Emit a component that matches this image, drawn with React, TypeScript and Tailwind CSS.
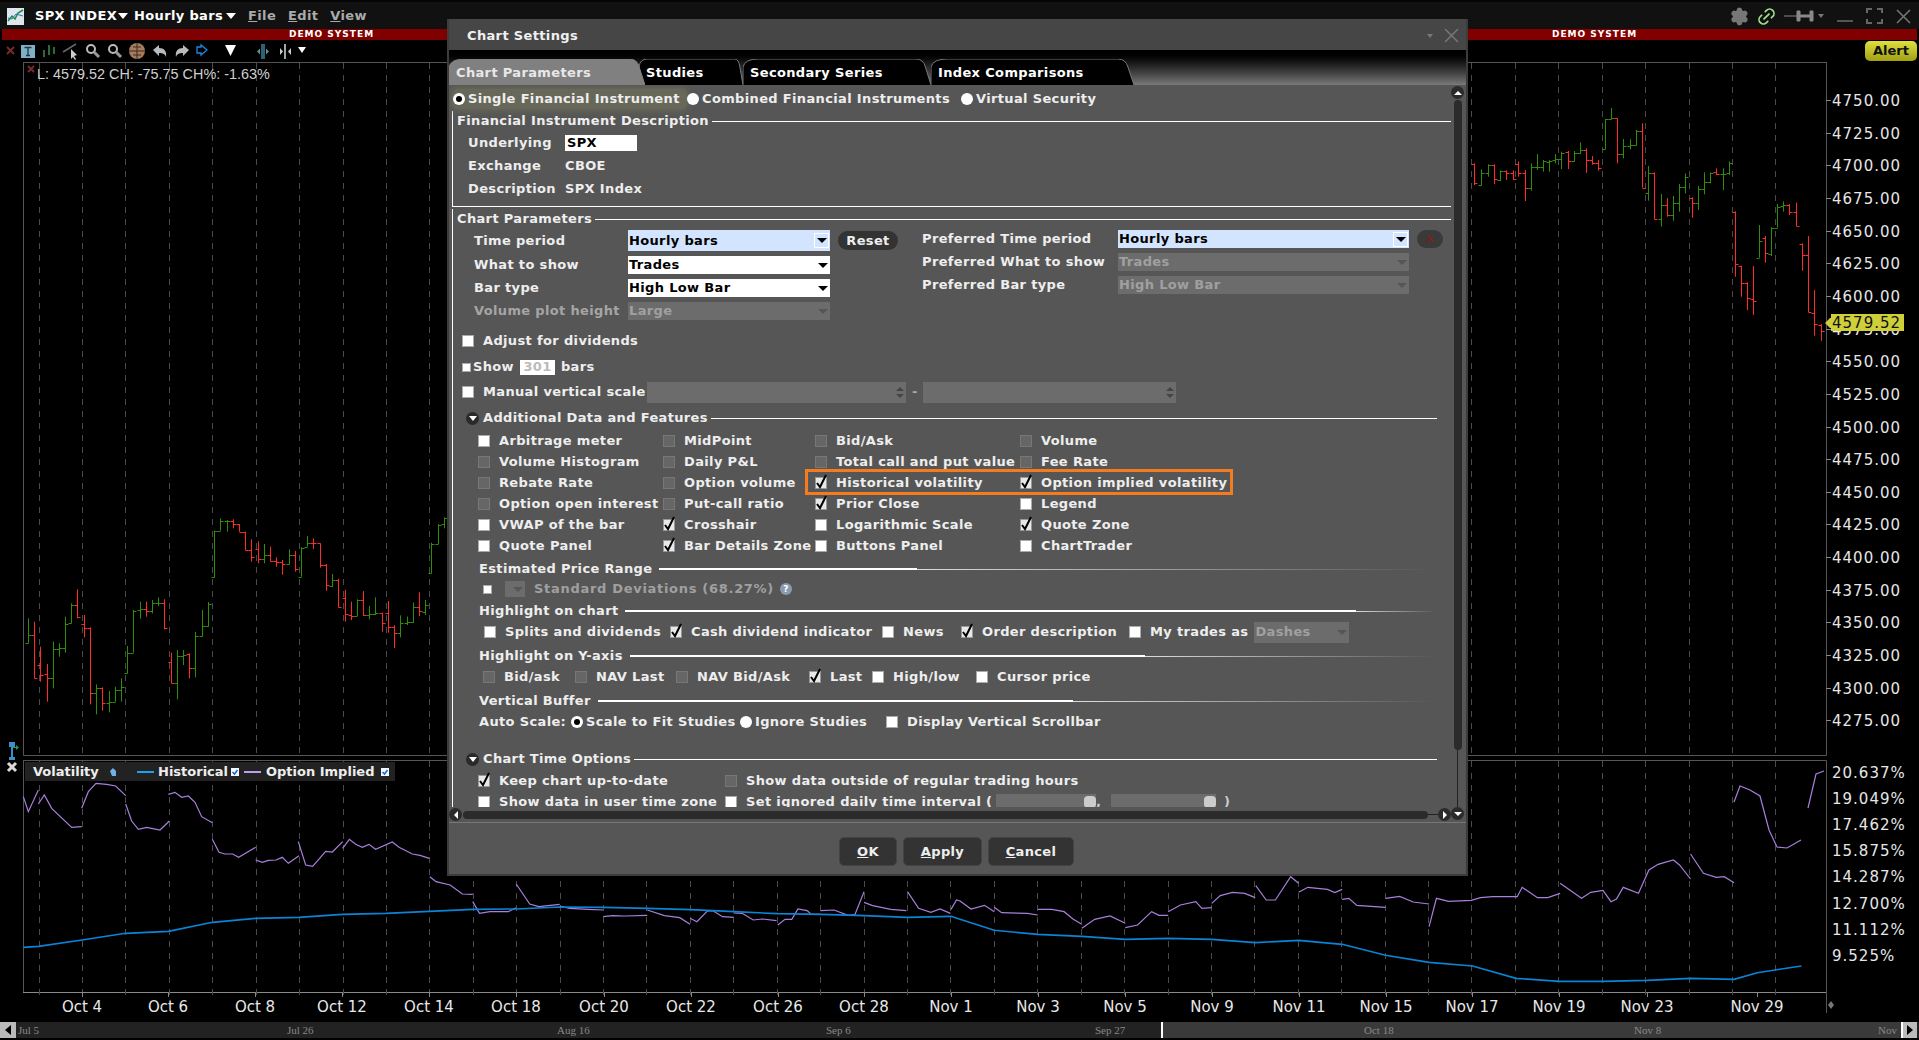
import React, { ReactNode } from 'react'
import { Link2, Settings } from 'lucide-react'

type Tone = 'focus' | 'white' | 'off'

// bars read off the picture at 3x: x, high, low, open, close, up
type Bar = [number, number, number, number, number, number]

const leftBars: Bar[] = [
  [85, 355, 430, 430, 405, 1], [103, 365, 535, 405, 535, 0], [121, 440, 545, 495, 525, 0], [142, 492, 605, 522, 535, 0],
  [160, 425, 565, 535, 447, 1], [178, 430, 470, 447, 445, 1], [196, 350, 458, 445, 372, 1], [214, 310, 370, 370, 315, 1],
  [232, 268, 355, 315, 350, 0], [253, 345, 412, 372, 385, 0], [271, 382, 613, 385, 580, 0], [289, 553, 643, 580, 565, 1],
  [307, 562, 632, 565, 610, 0], [328, 573, 637, 608, 606, 1], [346, 560, 605, 605, 570, 1], [364, 535, 605, 570, 560, 1],
  [382, 438, 520, 520, 458, 1], [400, 330, 458, 458, 333, 1], [421, 305, 356, 330, 328, 1], [439, 305, 350, 328, 332, 0],
  [457, 300, 340, 332, 310, 1], [475, 292, 318, 310, 310, 1], [493, 298, 388, 310, 385, 0], [514, 458, 550, 487, 548, 0],
  [532, 450, 598, 548, 468, 1], [550, 450, 495, 468, 465, 1], [568, 460, 535, 463, 505, 0], [586, 396, 532, 505, 408, 1],
  [607, 330, 410, 408, 378, 1], [625, 306, 380, 378, 312, 1], [643, 92, 232, 232, 92, 1], [661, 55, 92, 92, 62, 1],
  [682, 60, 95, 64, 62, 1], [700, 58, 85, 62, 72, 0], [718, 72, 95, 72, 95, 0], [736, 95, 150, 95, 150, 0],
  [754, 118, 185, 150, 172, 0], [775, 124, 190, 146, 178, 0], [793, 132, 190, 178, 165, 1], [811, 140, 185, 165, 184, 0],
  [829, 172, 200, 184, 187, 0], [847, 180, 224, 187, 193, 0], [868, 148, 193, 193, 165, 1], [886, 153, 215, 165, 208, 0],
  [904, 142, 230, 230, 145, 1], [922, 108, 140, 140, 128, 1], [940, 115, 147, 128, 130, 0], [961, 130, 203, 130, 195, 0],
  [979, 192, 272, 195, 255, 0], [997, 222, 260, 258, 240, 1], [1015, 236, 322, 240, 322, 0], [1036, 270, 365, 295, 343, 0],
  [1054, 305, 360, 345, 348, 0], [1072, 298, 348, 348, 300, 1], [1090, 273, 348, 300, 345, 0], [1108, 318, 358, 345, 343, 1],
  [1126, 292, 345, 343, 340, 1], [1147, 338, 395, 340, 368, 0], [1165, 303, 398, 338, 382, 0], [1183, 376, 444, 382, 400, 0],
  [1201, 346, 412, 400, 368, 1], [1222, 350, 375, 368, 365, 1], [1240, 308, 368, 365, 322, 1], [1258, 277, 348, 322, 333, 0],
  [1276, 300, 345, 335, 315, 1], [1294, 128, 220, 220, 132, 1], [1315, 72, 132, 132, 75, 1], [1333, 52, 85, 72, 55, 1],
]

const rightBars: Bar[] = [
  [41, 490, 555, 492, 550, 0], [64, 508, 557, 555, 520, 1], [83, 493, 530, 520, 495, 1], [101, 493, 552, 495, 538, 0],
  [119, 511, 543, 540, 513, 1], [137, 511, 540, 514, 518, 0], [158, 511, 540, 518, 538, 0], [173, 484, 530, 492, 520, 0],
  [194, 510, 603, 520, 563, 0], [212, 490, 572, 563, 502, 1], [230, 462, 510, 502, 502, 1], [250, 480, 515, 502, 484, 1],
  [268, 480, 515, 487, 483, 1], [286, 462, 490, 480, 478, 1], [304, 455, 507, 478, 458, 1], [325, 453, 507, 455, 483, 0],
  [343, 453, 485, 483, 460, 1], [361, 427, 462, 460, 450, 1], [379, 445, 518, 450, 480, 0], [397, 468, 494, 480, 488, 0],
  [415, 480, 512, 488, 505, 0], [436, 357, 448, 448, 358, 1], [454, 324, 358, 358, 355, 1], [472, 355, 490, 355, 463, 0],
  [490, 417, 475, 463, 437, 1], [511, 418, 448, 437, 436, 1], [529, 390, 437, 436, 393, 1], [547, 370, 563, 393, 563, 0],
  [565, 498, 602, 580, 520, 1], [583, 517, 658, 520, 658, 0], [604, 582, 680, 658, 615, 1], [622, 594, 650, 615, 645, 0],
  [640, 588, 662, 645, 608, 1], [658, 552, 635, 608, 562, 1], [676, 520, 580, 562, 530, 1], [697, 592, 653, 595, 610, 0],
  [715, 558, 630, 610, 568, 1], [733, 517, 583, 568, 545, 1], [751, 517, 550, 545, 520, 1], [769, 505, 525, 515, 523, 0],
  [790, 505, 570, 523, 522, 1], [808, 484, 525, 520, 490, 1], [826, 634, 830, 636, 793, 0], [844, 797, 890, 798, 848, 0],
  [862, 847, 930, 848, 895, 0], [880, 798, 945, 898, 902, 0], [898, 675, 773, 773, 723, 1], [916, 708, 788, 715, 760, 0],
  [934, 682, 768, 763, 685, 1], [952, 612, 683, 683, 620, 1], [970, 604, 635, 618, 615, 1], [988, 612, 645, 615, 637, 0],
  [1009, 608, 678, 637, 677, 0], [1027, 730, 812, 732, 766, 0], [1045, 708, 937, 766, 937, 0], [1063, 870, 1007, 940, 972, 0],
  [1084, 972, 1022, 975, 992, 0],
]

const gridX = Array.from({ length: 41 }, (_, i) => 38.6 + i * 43.42)

const xLabels: [string, number][] = [
  ['Oct 4', 82], ['Oct 6', 168], ['Oct 8', 255], ['Oct 12', 342], ['Oct 14', 429], ['Oct 18', 516], ['Oct 20', 604],
  ['Oct 22', 691], ['Oct 26', 778], ['Oct 28', 864], ['Nov 1', 951], ['Nov 3', 1038], ['Nov 5', 1125], ['Nov 9', 1212],
  ['Nov 11', 1299], ['Nov 15', 1386], ['Nov 17', 1472], ['Nov 19', 1559], ['Nov 23', 1647], ['Nov 29', 1757],
]

const priceLabels = Array.from({ length: 20 }, (_, i) => 4750 - i * 25)
const volLabels = ['20.637%', '19.049%', '17.462%', '15.875%', '14.287%', '12.700%', '11.112%', '9.525%']

const pts = (list: number[][]) => list.map(p => p.join(',')).join(' ')
const z9 = (a: number[][]) => a.map(([x, y]) => [x / 3, 500 + y / 3])
const z12 = (a: number[][]) => a.map(([x, y]) => [200 + x / 3, 770 + y / 3])
const z10 = (a: number[][]) => a.map(([x, y]) => [x / 1.633, 830 + y / 3])
const z11 = (a: number[][]) => a.map(([x, y]) => [960 + x / 1.633, 830 + y / 3])

const purple: number[][][] = [
  z9([[70, 890], [85, 935], [115, 870]]),
  z9([[115, 912], [133, 885], [155, 925], [215, 982], [245, 980]]),
  z9([[245, 925], [265, 875], [288, 850], [320, 853], [347, 858], [377, 887]]),
  z9([[377, 912], [395, 963], [415, 988], [440, 982], [480, 990], [508, 963]]),
  z9([[505, 883], [525, 877], [545, 892], [565, 888], [585, 907], [605, 950], [637, 968]]),
  z12([[37, 208], [57, 247], [75, 252], [98, 252], [116, 262], [167, 232]]),
  z12([[167, 270], [187, 277], [205, 271], [228, 270], [247, 262], [265, 280], [297, 257]]),
  z12([[295, 215], [317, 285], [338, 289], [377, 244], [397, 246], [428, 215]]),
  z12([[428, 235], [448, 208], [467, 223], [487, 232], [507, 223], [527, 238], [577, 216], [597, 232], [637, 252], [660, 256], [688, 265]]),
  z10([[702, 140], [712, 155], [735, 165], [755, 192], [772, 193]]),
  z10([[772, 215], [783, 250], [800, 245], [830, 245], [843, 233]]),
  z10([[843, 162], [865, 222], [880, 230], [914, 223]]),
  z10([[914, 228], [930, 235], [960, 238], [985, 240]]),
  z10([[985, 260], [1000, 257], [1020, 258], [1057, 256]]),
  z10([[1057, 240], [1085, 257], [1110, 263], [1127, 283]]),
  z10([[1127, 265], [1138, 275], [1155, 243], [1165, 243], [1180, 260], [1198, 262]]),
  z10([[1198, 249], [1212, 250], [1230, 270], [1245, 267], [1268, 272]]),
  z10([[1270, 285], [1282, 268], [1293, 268], [1303, 237], [1318, 242], [1325, 253], [1340, 253]]),
  z10([[1340, 242], [1362, 240], [1385, 256], [1396, 254], [1411, 185]]),
  z10([[1411, 217], [1425, 227], [1455, 238], [1480, 242]]),
  z10([[1482, 185], [1500, 235], [1520, 247], [1535, 237], [1552, 250]]),
  z10([[1553, 238], [1562, 210], [1568, 213]]),
  z11([[0, 213], [18, 237], [40, 226], [56, 245]]),
  z11([[56, 232], [68, 248], [110, 250], [127, 255]]),
  z11([[127, 238], [150, 238], [170, 245], [185, 268], [199, 283]]),
  z11([[199, 295], [220, 268], [245, 258], [270, 280]]),
  z11([[270, 293], [290, 285], [313, 245], [325, 256], [340, 256]]),
  z11([[340, 245], [360, 225], [385, 215], [395, 235], [411, 233]]),
  z11([[411, 220], [425, 197], [445, 187], [465, 190], [482, 203]]),
  z11([[483, 167], [500, 210], [515, 210], [540, 140], [553, 160]]),
  z11([[553, 187], [568, 172], [600, 178], [612, 188], [624, 178]]),
  z11([[624, 208], [635, 205], [648, 226], [695, 232]]),
  z11([[695, 205], [718, 199], [740, 216], [766, 222]]),
  z11([[766, 290], [778, 205], [798, 214], [835, 211], [850, 203], [870, 200], [910, 200], [918, 172], [943, 203], [960, 203], [980, 190]]),
  z11([[980, 160], [1015, 205], [1030, 187], [1050, 181], [1063, 215], [1072, 207], [1083, 172], [1108, 190], [1125, 120], [1140, 103], [1165, 90], [1175, 105], [1193, 147]]),
  z11([[1193, 72], [1214, 130], [1235, 142], [1248, 140], [1264, 158]]),
  [[1734, 802], [1740, 786], [1750, 790], [1760, 796], [1769, 830], [1777, 847], [1787, 848], [1801, 840]],
  [[1808, 808], [1816, 774], [1824, 771]],
]

const blue: number[][] = [
  ...z10([[38, 352], [63, 349], [134, 330], [205, 310], [275, 304], [347, 277], [417, 265], [488, 262], [559, 253], [630, 250], [701, 244], [772, 238], [843, 237], [914, 231], [986, 232], [1057, 235], [1128, 239], [1199, 245], [1270, 251], [1341, 253], [1411, 257], [1482, 262], [1553, 259]]),
  ...z11([[0, 268], [56, 301], [127, 313], [199, 319], [270, 328], [340, 325], [411, 328], [482, 338], [553, 331], [624, 343], [695, 376], [766, 397], [837, 408], [908, 445], [979, 454], [1050, 454], [1122, 451], [1193, 445], [1264, 448], [1302, 428], [1374, 408]]),
]

function PriceBars({ bars, x0, y0 }: { bars: Bar[]; x0: number; y0: number }) {
  return (
    <g fill="none" strokeWidth="1">
      {bars.map(([x, hi, lo, o, c, up]) => {
        const px = Math.round(x0 + x / 3) + 0.5
        const oy = Math.round(y0 + o / 3) + 0.5
        const cy = Math.round(y0 + c / 3) + 0.5
        return (
          <path
            key={x}
            stroke={up ? '#2f8e06' : '#ff2b2b'}
            d={`M${px} ${y0 + hi / 3}V${y0 + lo / 3}M${px - 3} ${oy}H${px}M${px} ${cy}H${px + 3}`}
          />
        )
      })}
    </g>
  )
}

function MainPane() {
  return (
    <svg className="block h-[698px] w-[1919px] shrink-0 font-['DejaVu_Sans']" viewBox="0 62 1919 698">
      <path d="M23.5 62V755.5H1826.5V62ZM23 62.5H1826" fill="none" stroke="#555" />
      {gridX.map(x => (
        <path key={x} d={`M${Math.round(x) + 0.5} 63V755`} stroke="#4a4a4a" strokeDasharray="6 6" />
      ))}
      <PriceBars bars={leftBars} x0={0} y0={500} />
      <PriceBars bars={rightBars} x0={1460} y0={0} />
      {priceLabels.map((p, i) => {
        const y = 100 + i * 32.65
        return (
          <g key={p}>
            <path d={`M1826 ${Math.round(y) + 0.5}h5`} stroke="#888" />
            <text x="1832" y={y + 6} fill="#e6e6e6" className="text-[15px] tracking-[1px]">{p}.00</text>
          </g>
        )
      })}
      <path d="M1825 323l5-5h1v-4h73v17h-73v-3h-1z" fill="#cfcf3a" />
      <text x="1832" y="328" fill="#111" className="text-[15px] tracking-[1px]">4579.52</text>
      <path d="M28 66l6 6M34 66l-6 6" stroke="#7a2a2a" strokeWidth="2" />
      <text x="37" y="79" fill="#d0d0d0" className="font-['Liberation_Sans'] text-[14.4px]">L: 4579.52 CH: -75.75 CH%: -1.63%</text>
      <path d="M9 742h6v5h-2v10h2v5H9v-5h2v-10H9z" fill="#3d8fc7" />
      <path d="M13 747h3v-2l3 2.500-3 2.500v-2h-3z" fill="#1d9c55" />
    </svg>
  )
}

function StudyPane() {
  return (
    <svg className="block h-[262px] w-[1919px] shrink-0 font-['DejaVu_Sans']" viewBox="0 760 1919 262">
      <path d="M23.5 760.5H1826.5V1013M23.5 760V992" fill="none" stroke="#555" />
      <path d="M23 992.5H1826" stroke="#8a8a8a" />
      {gridX.map(x => (
        <path key={x} d={`M${Math.round(x) + 0.5} 761V997`} stroke="#4a4a4a" strokeDasharray="6 6" />
      ))}
      <path d="M8 763l8 8M16 763l-8 8" stroke="#d8d8d8" strokeWidth="3" />
      {purple.map((line, i) => (
        <polyline key={i} points={pts(line)} fill="none" stroke="#a87fdc" strokeWidth="1.2" />
      ))}
      <polyline points={pts(blue)} fill="none" stroke="#0a84d6" strokeWidth="1.6" />
      {volLabels.map((v, i) => (
        <text key={v} x="1832" y={778 + i * 26.1} fill="#e6e6e6" className="text-[15px] tracking-[1px]">{v}</text>
      ))}
      {xLabels.map(([label, x]) => (
        <g key={label}>
          <path d={`M${x + 0.5} 992v5`} stroke="#888" />
          <text x={x} y="1012" textAnchor="middle" fill="#e8e8e8" className="text-[15px]">{label}</text>
        </g>
      ))}
      <path d="M1831 1001l3 4-3 4-3-4z" fill="#777" />
    </svg>
  )
}

function TriangleDown({ className }: { className: string }) {
  return <span className={`inline-block h-0 w-0 border-x-[5px] border-t-[6px] border-x-transparent ${className}`} />
}

function Toolbar() {
  return (
    <svg className="block h-[22px] w-[320px]" viewBox="0 40 320 22">
      <path d="M7 47l7 7M14 47l-7 7" stroke="#7a2a2a" strokeWidth="2" />
      <rect x="21" y="45" width="14" height="13" fill="#7fb0c8" />
      <path d="M24.500 47.500h7M28 47.500v8M26 55.500h4" stroke="#234" strokeWidth="1.3" fill="none" />
      <path d="M44 50v7M49 45v10M54 47v7" stroke="#2d6a3a" strokeWidth="2" />
      <path d="M63 52l13-8" stroke="#667" strokeWidth="1.5" />
      <path d="M71 49v10l2-2 2 3 1-1-2-3 3-1z" fill="#ccc" />
      <circle cx="91" cy="49" r="4" fill="none" stroke="#bbb" strokeWidth="2" />
      <path d="M94 52l5 5" stroke="#999" strokeWidth="3" />
      <circle cx="113" cy="49" r="4" fill="none" stroke="#bbb" strokeWidth="2" />
      <path d="M116 52l5 5" stroke="#999" strokeWidth="3" />
      <circle cx="137" cy="51" r="8" fill="#a67c5c" />
      <path d="M129 51h16M137 43v16M133 47h8M133 55h8" stroke="#3a2a20" strokeWidth="1" />
      <path d="M153 50l6-5v3c5 0 8 3 7 9-1-3-3-4-7-4v3z" fill="#bbb" />
      <path d="M189 50l-6-5v3c-5 0-8 3-7 9 1-3 3-4 7-4v3z" fill="#bbb" />
      <path d="M197 47h4v-2l6 5-6 5v-2h-4z" fill="none" stroke="#1e88e5" strokeWidth="1.3" />
      <path d="M225 45h11l-5.500 11z" fill="#fff" />
      <rect x="261" y="44" width="4" height="15" fill="#2f5f7a" />
      <path d="M257 51.500l3-3v6zM269 51.500l-3-3v6z" fill="#5a9a7a" />
      <rect x="284" y="44" width="2" height="15" fill="#9aa" />
      <path d="M280 48v7l3-3.500zM291 48v7l-3-3.500z" fill="#ccc" />
      <path d="M298 47h8l-4 6z" fill="#fff" />
    </svg>
  )
}

function TitleBar() {
  return (
    <div className="flex h-[29px] shrink-0 items-center border-t-2 border-[#050505] bg-[#111] pl-[7px] pr-[8px] pt-[1px] text-[13px] font-bold tracking-[0.35px]">
      <svg className="h-[17px] w-[17px] shrink-0" viewBox="0 0 17 17">
        <rect width="17" height="17" fill="#dfe6ee" />
        <path d="M1 13l4-5 3 3 3-6 5-3" fill="none" stroke="#1d8f3a" strokeWidth="1.500" />
        <path d="M1 10l4 1 4-5 7 2" fill="none" stroke="#2a70d0" strokeWidth="1" />
      </svg>
      <span className="ml-[11px] text-white">SPX INDEX</span>
      <TriangleDown className="ml-[1px] border-t-white" />
      <span className="ml-[6px] text-white">Hourly bars</span>
      <TriangleDown className="ml-[3px] border-t-white" />
      <span className="ml-[12px] text-[#aaa]"><u>F</u>ile</span>
      <span className="ml-[12px] text-[#aaa]"><u>E</u>dit</span>
      <span className="ml-[12px] text-[#aaa]"><u>V</u>iew</span>
      <div className="ml-auto flex items-center">
        <Settings className="h-[19px] w-[19px] fill-[#777] text-[#777]" strokeWidth={2.500} />
        <Link2 className="ml-[7px] h-[21px] w-[21px] -rotate-45 text-[#9fe08c]" strokeWidth={2} />
        <svg className="ml-[7px] h-[14px] w-[42px]" viewBox="0 0 42 14">
          <path d="M0 7h13M13 2h3v4h10V2h3v10h-3V8H16v4h-3z" fill="#888" stroke="#888" />
          <path d="M34 5h6l-3 4z" fill="#777" />
        </svg>
        <span className="ml-[11px] mt-[10px] h-[2px] w-[16px] bg-[#555]" />
        <svg className="ml-[13px] h-[16px] w-[17px]" viewBox="0 0 17 16">
          <path d="M1 5V1h5M11 1h5v4M16 11v4h-5M6 15H1v-4" fill="none" stroke="#666" strokeWidth="2" />
        </svg>
        <svg className="ml-[13px] h-[15px] w-[15px]" viewBox="0 0 15 15">
          <path d="M1 1l13 13M14 1L1 14" stroke="#777" strokeWidth="1.500" />
        </svg>
      </div>
    </div>
  )
}

function Legend() {
  return (
    <div className="absolute left-[25px] top-[762px] flex h-[19px] w-[370px] items-center bg-[#222] pl-[8px] text-[13px] font-bold text-[#eee]">
      <span className="w-[76px]">Volatility</span>
      <svg className="mr-[20px] h-[8px] w-[8px]" viewBox="0 0 8 8">
        <path d="M1 3l3-3 3 3v5H3z" fill="#6fb0e8" />
      </svg>
      <span className="h-[2px] w-[17px] bg-[#1ea1f0]" />
      <span className="ml-[4px] w-[73px]">Historical</span>
      <MiniCheck />
      <span className="ml-[5px] h-[2px] w-[17px] bg-[#c09cf0]" />
      <span className="ml-[5px] w-[115px]">Option Implied</span>
      <MiniCheck />
    </div>
  )
}

function MiniCheck() {
  return (
    <svg className="h-[8px] w-[8px] shrink-0" viewBox="0 0 8 8">
      <rect width="8" height="8" fill="#f4f8ff" />
      <path d="M1.500 4l2 2 3-4" fill="none" stroke="#1565d8" strokeWidth="1.500" />
    </svg>
  )
}

function Scroller() {
  const labels: [string, string][] = [
    ['Jul 5', 'w-[269px]'], ['Jul 26', 'w-[270px]'], ['Aug 16', 'w-[269px]'], ['Sep 6', 'w-[269px]'],
    ['Sep 27', 'w-[269px]'], ['Oct 18', 'w-[270px]'], ['Nov 8', 'w-[244px]'], ['Nov', 'w-[25px]'],
  ]
  return (
    <div className="relative flex h-[16px] shrink-0 items-center bg-[#222] font-['Liberation_Serif'] text-[11px] text-[#888]">
      <span className="absolute bottom-0 left-[1161px] top-0 w-[742px] border-x-2 border-white bg-[#3a3a3a]" />
      <span className="relative flex h-full w-[16px] items-center justify-center bg-[#bbb]">
        <span className="h-0 w-0 border-y-[5px] border-r-[6px] border-y-transparent border-r-black" />
      </span>
      <div className="relative ml-[2px] flex">
        {labels.map(([text, width]) => (
          <span key={text} className={width}>{text}</span>
        ))}
      </div>
      <span className="absolute bottom-0 right-[2px] top-0 flex w-[14px] items-center justify-center bg-[#bbb]">
        <span className="h-0 w-0 border-y-[5px] border-l-[6px] border-y-transparent border-l-black" />
      </span>
    </div>
  )
}

function Caret({ dim }: { dim?: boolean }) {
  return <span className={`h-0 w-0 border-x-[5px] border-t-[5px] border-x-transparent ${dim ? 'border-t-[#555]' : 'border-t-black'}`} />
}

function Select({ value, tone, className }: { value: string; tone: Tone; className: string }) {
  const look = {
    focus: 'bg-[#d3e4ff] text-black',
    white: 'bg-white text-black',
    off: 'bg-[#6c6c6c] text-[#a0a0a0]',
  }[tone]
  return (
    <div className={`flex shrink-0 items-center justify-between pl-[1px] ${look} ${className}`}>
      <span>{value}</span>
      {tone === 'focus' ? (
        <span className="mr-[1px] flex h-[15px] w-[15px] items-center justify-center border border-white">
          <Caret />
        </span>
      ) : (
        <span className="mr-[2px] flex"><Caret dim={tone === 'off'} /></span>
      )}
    </div>
  )
}

function Spin({ className }: { className: string }) {
  return (
    <span className={`flex h-[21px] shrink-0 flex-col items-end justify-center gap-[3px] bg-[#6c6c6c] pr-[2px] ${className}`}>
      <span className="h-0 w-0 border-x-[4px] border-b-[4px] border-x-transparent border-b-[#444]" />
      <span className="h-0 w-0 border-x-[4px] border-t-[4px] border-x-transparent border-t-[#444]" />
    </span>
  )
}

function Box({ on, off, className = 'h-3 w-3' }: { on?: boolean; off?: boolean; className?: string }) {
  return (
    <span className={`relative shrink-0 border ${off ? 'border-[#777] bg-[#666]' : on ? 'border-[#999] bg-[#e8e8e8]' : 'border-[#aaa] bg-white'} ${className}`}>
      {on && (
        <svg className="absolute -left-[1px] -top-[4px] h-[15px] w-[14px]" viewBox="0 0 14 15">
          <path d="M2 9l3 4 6-12" fill="none" stroke="#000" strokeWidth="2" />
        </svg>
      )}
    </span>
  )
}

function Check({ label, on, off, className = '' }: { label: string; on?: boolean; off?: boolean; className?: string }) {
  return (
    <span className={`flex shrink-0 items-center gap-[9px] whitespace-nowrap ${className}`}>
      <Box on={on} off={off} />
      <span>{label}</span>
    </span>
  )
}

function Radio({ label, on, className = '' }: { label: string; on?: boolean; className?: string }) {
  return (
    <span className={`flex shrink-0 items-center gap-[3px] whitespace-nowrap ${className}`}>
      <span className="flex h-3 w-3 shrink-0 items-center justify-center rounded-full bg-white">
        {on && <span className="h-[6px] w-[6px] rounded-full bg-black" />}
      </span>
      <span>{label}</span>
    </span>
  )
}

function Legendline({ title, className }: { title: string; className: string }) {
  return (
    <div className={`flex h-5 items-center gap-[3px] ${className}`}>
      <span className="whitespace-nowrap">{title}</span>
      <span className="h-px flex-1 bg-white" />
    </div>
  )
}

function FadeHeading({ title, solid, className }: { title: string; solid: string; className: string }) {
  return (
    <div className={`flex h-5 items-center pl-[26px] pr-[16px] ${className}`}>
      <span className="mr-[7px] whitespace-nowrap">{title}</span>
      <span className={`h-[2px] bg-white ${solid}`} />
      <span className="h-px flex-1 bg-linear-to-r from-[#ddd] to-transparent" />
    </div>
  )
}

function Toggle({ title, className }: { title: string; className: string }) {
  return (
    <div className={`flex h-5 items-center pl-[13px] pr-[14px] ${className}`}>
      <span className="flex h-[13px] w-[13px] items-center justify-center rounded-full bg-[#2a2a2a]">
        <span className="h-0 w-0 border-x-[4px] border-t-[5px] border-x-transparent border-t-white" />
      </span>
      <span className="ml-[4px] mr-[3px] whitespace-nowrap">{title}</span>
      <span className="h-px flex-1 bg-white" />
    </div>
  )
}

function Row({ className, children }: { className: string; children: ReactNode }) {
  return <div className={`flex h-5 items-center whitespace-nowrap ${className}`}>{children}</div>
}

const features: { label: string; on?: boolean; off?: boolean }[] = [
  { label: 'Arbitrage meter' }, { label: 'MidPoint', off: true }, { label: 'Bid/Ask', off: true }, { label: 'Volume', off: true },
  { label: 'Volume Histogram', off: true }, { label: 'Daily P&L', off: true }, { label: 'Total call and put value', off: true }, { label: 'Fee Rate', off: true },
  { label: 'Rebate Rate', off: true }, { label: 'Option volume', off: true }, { label: 'Historical volatility', on: true }, { label: 'Option implied volatility', on: true },
  { label: 'Option open interest', off: true }, { label: 'Put-call ratio', off: true }, { label: 'Prior Close', on: true }, { label: 'Legend' },
  { label: 'VWAP of the bar' }, { label: 'Crosshair', on: true }, { label: 'Logarithmic Scale' }, { label: 'Quote Zone', on: true },
  { label: 'Quote Panel' }, { label: 'Bar Details Zone', on: true }, { label: 'Buttons Panel' }, { label: 'ChartTrader' },
]

function DialogForm() {
  return (
    <div className="h-[722px] overflow-hidden">
      <Row className="mt-[4px] pl-[3px]">
        <span className="flex h-5 w-[235px] items-center rounded-md bg-[#68685a] pl-[1px] shadow-[0_0_6px_2px_#68685a]">
          <Radio on label="Single Financial Instrument" />
        </span>
        <Radio label="Combined Financial Instruments" className="w-[274px]" />
        <Radio label="Virtual Security" />
      </Row>

      <div className="ml-[3px] mt-[2px] border-b border-white">
        <div className="border-l border-white pb-[6px]">
          <Legendline title="Financial Instrument Description" className="pl-[4px]" />
          <div className="flex h-[23px] items-center pl-[15px]">
            <span className="w-[97px]">Underlying</span>
            <span className="flex h-[16px] w-[72px] items-center bg-white pl-[2px] text-black">SPX</span>
          </div>
          <div className="flex h-[23px] items-center pl-[15px]">
            <span className="w-[97px]">Exchange</span>
            <span>CBOE</span>
          </div>
          <div className="flex h-[23px] items-center pl-[15px]">
            <span className="w-[97px]">Description</span>
            <span>SPX Index</span>
          </div>
        </div>
      </div>

      <div className="ml-[3px] mt-[2px] border-l border-white">
        <Legendline title="Chart Parameters" className="pl-[4px]" />
        <div className="mt-[1px] flex">
          <div className="flex w-[469px] flex-col gap-[5px] pl-[21px]">
            <div className="flex items-center">
              <span className="w-[154px]">Time period</span>
              <Select value="Hourly bars" tone="focus" className="h-[21px] w-[202px]" />
              <span className="ml-[8px] flex h-[19px] w-[60px] items-center justify-center rounded-full bg-[#333]">Reset</span>
            </div>
            <div className="flex items-center">
              <span className="w-[154px]">What to show</span>
              <Select value="Trades" tone="white" className="h-[18px] w-[202px]" />
            </div>
            <div className="flex items-center">
              <span className="w-[154px]">Bar type</span>
              <Select value="High Low Bar" tone="white" className="h-[18px] w-[202px]" />
            </div>
            <div className="flex items-center text-[#a5a5a5]">
              <span className="w-[154px]">Volume plot height</span>
              <Select value="Large" tone="off" className="h-[18px] w-[202px]" />
            </div>
          </div>
          <div className="flex flex-col gap-[5px]">
            <div className="flex items-center">
              <span className="w-[196px]">Preferred Time period</span>
              <Select value="Hourly bars" tone="focus" className="h-[18px] w-[291px]" />
              <span className="ml-[8px] flex h-[18px] w-[26px] items-center justify-center rounded-full bg-[#3a3a3a] text-[11px] text-[#7a2020]">x</span>
            </div>
            <div className="flex items-center">
              <span className="w-[196px]">Preferred What to show</span>
              <Select value="Trades" tone="off" className="h-[18px] w-[291px]" />
            </div>
            <div className="flex items-center">
              <span className="w-[196px]">Preferred Bar type</span>
              <Select value="High Low Bar" tone="off" className="h-[18px] w-[291px]" />
            </div>
          </div>
        </div>

        <Row className="mt-[11px] pl-[9px]">
          <Check label="Adjust for dividends" />
        </Row>
        <Row className="mt-[6px] pl-[9px]">
          <Box className="h-[9px] w-[9px]" />
          <span className="ml-[2px]">Show</span>
          <span className="ml-[6px] flex h-[15px] w-[35px] items-center justify-center bg-white text-[#bbb]">301</span>
          <span className="ml-[6px]">bars</span>
        </Row>
        <Row className="mt-[5px] pl-[9px]">
          <Check label="Manual vertical scale" className="w-[185px]" />
          <Spin className="w-[259px]" />
          <span className="mx-[6px] w-[5px] text-[#aaa]">-</span>
          <Spin className="w-[253px]" />
        </Row>
        <Toggle title="Additional Data and Features" className="mt-[6px]" />

        <div className="relative mt-[2px] grid grid-cols-[185px_152px_205px_auto] pl-[25px]">
          {features.map(f => (
            <div key={f.label} className="flex h-[21px] items-center">
              <Check label={f.label} on={f.on} off={f.off} />
            </div>
          ))}
          <span className="pointer-events-none absolute left-[352px] top-[39px] h-[26px] w-[428px] border-[3px] border-[#f47c20]" />
        </div>

        <FadeHeading title="Estimated Price Range" solid="w-[258px]" className="mt-[3px]" />
        <Row className="pl-[30px] text-[#a0a0a0]">
          <Box className="h-[9px] w-[9px]" />
          <span className="ml-[13px] flex h-[16px] w-[20px] items-center justify-end bg-[#6c6c6c] pr-[2px]"><Caret dim /></span>
          <span className="ml-[9px] tracking-[0.7px]">Standard Deviations (68.27%)</span>
          <span className="ml-[6px] flex h-3 w-3 items-center justify-center rounded-full bg-[#8a9bb0] text-[9px] text-white">?</span>
        </Row>
        <FadeHeading title="Highlight on chart" solid="w-[731px]" className="mt-[2px]" />
        <Row className="mt-px pl-[31px]">
          <Check label="Splits and dividends" className="w-[186px]" />
          <Check label="Cash dividend indicator" on className="w-[212px]" />
          <Check label="News" className="w-[79px]" />
          <Check label="Order description" on className="w-[168px]" />
          <Check label="My trades as" />
          <Select value="Dashes" tone="off" className="ml-[6px] h-[21px] w-[95px]" />
        </Row>
        <FadeHeading title="Highlight on Y-axis" solid="w-[515px]" className="mt-[4px]" />
        <Row className="mt-px pl-[30px]">
          <Check label="Bid/ask" off className="w-[92px]" />
          <Check label="NAV Last" off className="w-[101px]" />
          <Check label="NAV Bid/Ask" off className="w-[133px]" />
          <Check label="Last" on className="w-[63px]" />
          <Check label="High/low" className="w-[104px]" />
          <Check label="Cursor price" />
        </Row>
        <FadeHeading title="Vertical Buffer" solid="w-[475px]" className="mt-[4px]" />
        <Row className="mt-px pl-[26px]">
          <span className="w-[92px]">Auto Scale:</span>
          <Radio on label="Scale to Fit Studies" className="w-[169px]" />
          <Radio label="Ignore Studies" className="w-[146px]" />
          <Check label="Display Vertical Scrollbar" />
        </Row>
        <Toggle title="Chart Time Options" className="mt-[17px]" />
        <Row className="mt-[2px] pl-[25px]">
          <Check label="Keep chart up-to-date" className="w-[247px]" on />
          <Check label="Show data outside of regular trading hours" off />
        </Row>
        <Row className="mt-px pl-[25px]">
          <Check label="Show data in user time zone" className="w-[247px]" />
          <Check label="Set ignored daily time interval (" className="w-[271px]" />
          <span className="flex h-[16px] w-[100px] items-center justify-end bg-[#6c6c6c]">
            <span className="h-[12px] w-[12px] rounded-sm bg-[#ccc]" />
          </span>
          <span className="w-[15px] text-[#ccc]">,</span>
          <span className="flex h-[16px] w-[105px] items-center justify-end bg-[#6c6c6c]">
            <span className="h-[12px] w-[12px] rounded-sm bg-[#ccc]" />
          </span>
          <span className="ml-[8px] text-[#ccc]">)</span>
        </Row>
      </div>
    </div>
  )
}

function Tab({ label, active, className, path }: { label: string; active?: boolean; className: string; path: string }) {
  return (
    <div className={`relative h-[26px] shrink-0 ${className}`}>
      <svg className="absolute inset-0 h-full w-full" preserveAspectRatio="none" viewBox="0 0 100 26">
        <path d={path} fill={active ? '#808080' : '#000'} stroke={active ? '#808080' : '#777'} strokeWidth="1" vectorEffect="non-scaling-stroke" />
      </svg>
      <span className={`relative flex h-full items-center whitespace-nowrap pl-[7px] pt-[1px] ${active ? 'text-[#e8e8e8]' : 'text-white'}`}>{label}</span>
    </div>
  )
}

function DialogButton({ className, children }: { className: string; children: ReactNode }) {
  return <span className={`flex h-[29px] items-center justify-center rounded-[5px] border border-[#444] bg-[#333] ${className}`}>{children}</span>
}

function ScrollEnd({ children }: { children: ReactNode }) {
  return <span className="flex h-[13px] w-[13px] shrink-0 items-center justify-center rounded-full bg-[#2b2b2b]">{children}</span>
}

function Dialog() {
  const tabPath = 'M0 26V8Q1 0 8 0H92Q96 0 97 8L100 26'
  return (
    <div className="absolute left-[447px] top-[19px] flex h-[857px] w-[1021px] flex-col border-x-2 border-b-2 border-[#3c3c3c] bg-[#565656] text-[13px] font-bold leading-[16px] tracking-[0.35px] text-[#eee]">
      <div className="flex h-[31px] shrink-0 items-center bg-[#464646] pl-[18px] pr-[7px] pt-[2px]">
        <span className="text-[#f0f0f0]">Chart Settings</span>
        <span className="ml-auto h-0 w-0 border-x-[3px] border-t-[4px] border-x-transparent border-t-[#777]" />
        <svg className="ml-[11px] h-[15px] w-[15px]" viewBox="0 0 15 15">
          <path d="M1 1l13 13M14 1L1 14" stroke="#777" strokeWidth="1.500" />
        </svg>
      </div>
      <div className="flex h-[35px] shrink-0 items-end bg-linear-to-b from-black to-[#7a7a7a]">
        <Tab label="Chart Parameters" active className="z-10 w-[196px]" path={tabPath} />
        <Tab label="Studies" className="-ml-[6px] w-[104px]" path={tabPath} />
        <Tab label="Secondary Series" className="w-[188px]" path={tabPath} />
        <Tab label="Index Comparisons" className="w-[203px]" path={tabPath} />
      </div>
      <div className="flex h-[737px] shrink-0">
        <div className="min-w-0 flex-1">
          <DialogForm />
          <div className="flex h-[15px] items-center">
            <ScrollEnd><span className="h-0 w-0 border-y-[4px] border-r-[4px] border-y-transparent border-r-white" /></ScrollEnd>
            <span className="ml-[1px] h-[8px] flex-1 rounded-full bg-[#2b2b2b]" />
            <span className="h-px w-[10px] bg-[#222]" />
            <ScrollEnd><span className="h-0 w-0 border-y-[4px] border-l-[4px] border-y-transparent border-l-white" /></ScrollEnd>
          </div>
        </div>
        <div className="mr-[2px] flex w-[13px] shrink-0 flex-col items-center pt-[1px]">
          <ScrollEnd><span className="h-0 w-0 border-x-[4px] border-b-[4px] border-x-transparent border-b-white" /></ScrollEnd>
          <span className="mt-[1px] h-[650px] w-[8px] rounded-full bg-[#2b2b2b]" />
          <span className="h-[57px] w-px bg-[#222]" />
          <ScrollEnd><span className="h-0 w-0 border-x-[4px] border-t-[4px] border-x-transparent border-t-white" /></ScrollEnd>
        </div>
      </div>
      <div className="flex flex-1 gap-[6px] border-t border-[#777] pl-[390px] pt-[14px]">
        <DialogButton className="w-[58px]"><span><u>O</u>K</span></DialogButton>
        <DialogButton className="w-[79px]"><span><u>A</u>pply</span></DialogButton>
        <DialogButton className="w-[86px]"><span><u>C</u>ancel</span></DialogButton>
      </div>
    </div>
  )
}

export default function App() {
  return (
    <div className="relative flex h-[1040px] w-[1919px] flex-col overflow-hidden bg-black font-['DejaVu_Sans',sans-serif]">
      <TitleBar />
      <div className="mx-[2px] flex h-[11px] shrink-0 items-center bg-[#800000] text-[9px] font-bold tracking-[1px] text-white">
        <span className="ml-[287px] w-[1263px]">DEMO SYSTEM</span>
        <span>DEMO SYSTEM</span>
      </div>
      <div className="flex h-[22px] shrink-0 items-center justify-between pr-[2px]">
        <Toolbar />
        <span className="flex h-[20px] w-[52px] items-center justify-center rounded-[5px] bg-linear-to-b from-[#e0e040] to-[#a0a010] text-[13px] font-bold text-[#111]">Alert</span>
      </div>
      <MainPane />
      <StudyPane />
      <Scroller />
      <Legend />
      <Dialog />
    </div>
  )
}
